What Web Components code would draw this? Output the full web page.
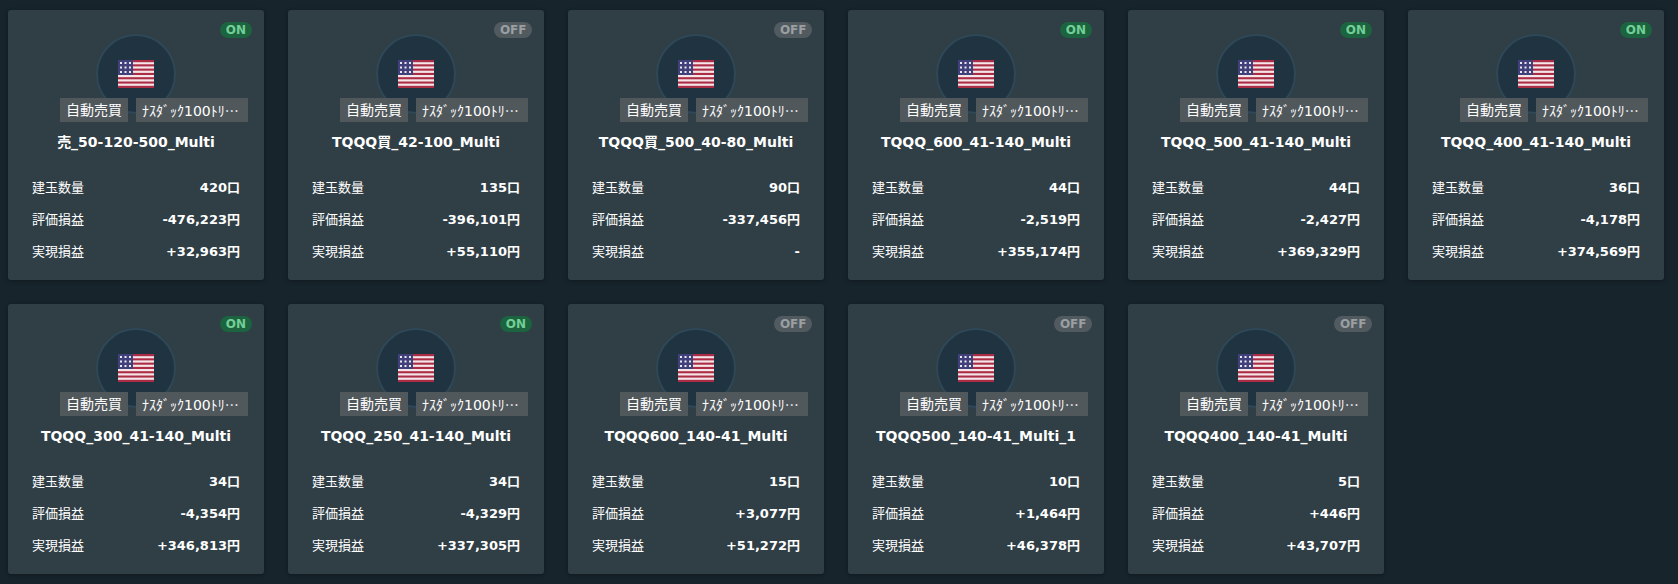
<!DOCTYPE html>
<html lang="ja"><head><meta charset="utf-8">
<style>
html,body{margin:0;height:584px;overflow:hidden;background:#17242c}
body{font-family:"DejaVu Sans","Noto Sans CJK JP",sans-serif;color:#fff}
</style></head><body>
<bot-grid id="g"></bot-grid>
<script>
const FLAG=`<svg width="36" height="28" viewBox="0 0 36 28" aria-hidden="true"><rect width="36" height="28" rx="1" fill="#f4e6e8"/><g fill="#ab2c44"><rect y="0" width="36" height="2.2"/><rect y="4.3" width="36" height="2.1"/><rect y="8.6" width="36" height="2.1"/><rect y="12.9" width="36" height="2.1"/><rect y="17.2" width="36" height="2.1"/><rect y="21.5" width="36" height="2.1"/><rect y="25.8" width="36" height="2.2"/></g><rect width="15" height="15" fill="#42407a"/><g fill="#e8e8f4"><rect x="2" y="2" width="2" height="2"/><rect x="6.500" y="2" width="2" height="2"/><rect x="11" y="2" width="2" height="2"/><rect x="2" y="6.500" width="2" height="2"/><rect x="6.500" y="6.500" width="2" height="2"/><rect x="11" y="6.500" width="2" height="2"/><rect x="2" y="11" width="2" height="2"/><rect x="6.500" y="11" width="2" height="2"/><rect x="11" y="11" width="2" height="2"/></g></svg>`;
class BotCard extends HTMLElement{
 connectedCallback(){const s=this.attachShadow({mode:"open"});
 const on=this.getAttribute("state")==="ON";
 const rows=[["建玉数量",this.getAttribute("qty")],["評価損益",this.getAttribute("pl")],["実現損益",this.getAttribute("real")]];
 s.innerHTML=`<style>
 :host{display:flex;flex-direction:column;position:relative;width:256px;height:270px;box-sizing:border-box;background:#303e45;border-radius:3px;box-shadow:0 1px 4px rgba(0,0,0,.35);padding-top:24px}
 .badge{position:absolute;top:12px;right:12px;height:16px;line-height:16px;padding:0 6px;border-radius:8px;font-size:12px;font-weight:700}
 .on{background:#1c6440;color:#72cf96}.off{background:#515a5f;color:#9a9fa2;padding:0 5.5px}
 .icon{align-self:center;width:80px;height:80px;box-sizing:border-box;border:2px solid #2e4857;border-radius:50%;background:#203341;display:flex;align-items:center;justify-content:center;flex:none}
 .tags{display:flex;justify-content:flex-end;gap:8px;padding-right:16px;margin-top:-16px;position:relative;height:24px;flex:none}
 .tag{background:#50585c;height:24px;line-height:24px;padding:0 6px;font-size:14px;color:#fff;white-space:nowrap;box-sizing:border-box}
 .t2{width:112px}
 .dots{font-family:"Noto Sans CJK JP",sans-serif}
 .title{margin-top:10px;height:20px;line-height:20px;text-align:center;font-size:14px;font-weight:700;white-space:nowrap}
 .stats{margin:26px 24px 0;display:grid;row-gap:12px}
 .row{display:flex;justify-content:space-between;height:20px;line-height:20px;font-size:13px}
 .v{font-weight:700}
 </style>
 <span class="badge ${on?"on":"off"}">${on?"ON":"OFF"}</span>
 <div class="icon">${FLAG}</div>
 <div class="tags"><span class="tag">自動売買</span><span class="tag t2">ﾅｽﾀﾞｯｸ100ﾄﾘ<span class="dots">…</span></span></div>
 <div class="title"><slot></slot></div>
 <div class="stats">${rows.map(r=>`<div class="row"><span>${r[0]}</span><span class="v">${r[1]}</span></div>`).join("")}</div>`;
 }
}
customElements.define("bot-card",BotCard);
class BotGrid extends HTMLElement{
 constructor(){super();this.attachShadow({mode:"open"}).innerHTML=`<style>:host{display:grid;grid-template-columns:repeat(6,256px);gap:24px;padding:10px 8px 0}</style><slot></slot>`;}
 connectedCallback(){
  const D=[["売_50-120-500_Multi","ON","420口","-476,223円","+32,963円"],["TQQQ買_42-100_Multi","OFF","135口","-396,101円","+55,110円"],["TQQQ買_500_40-80_Multi","OFF","90口","-337,456円","-"],["TQQQ_600_41-140_Multi","ON","44口","-2,519円","+355,174円"],["TQQQ_500_41-140_Multi","ON","44口","-2,427円","+369,329円"],["TQQQ_400_41-140_Multi","ON","36口","-4,178円","+374,569円"],["TQQQ_300_41-140_Multi","ON","34口","-4,354円","+346,813円"],["TQQQ_250_41-140_Multi","ON","34口","-4,329円","+337,305円"],["TQQQ600_140-41_Multi","OFF","15口","+3,077円","+51,272円"],["TQQQ500_140-41_Multi_1","OFF","10口","+1,464円","+46,378円"],["TQQQ400_140-41_Multi","OFF","5口","+446円","+43,707円"]];
  for(const d of D){const c=document.createElement("bot-card");c.setAttribute("state",d[1]);c.setAttribute("qty",d[2]);c.setAttribute("pl",d[3]);c.setAttribute("real",d[4]);c.textContent=d[0];this.append(c);}
 }
}
customElements.define("bot-grid",BotGrid);
</script>
</body></html>
